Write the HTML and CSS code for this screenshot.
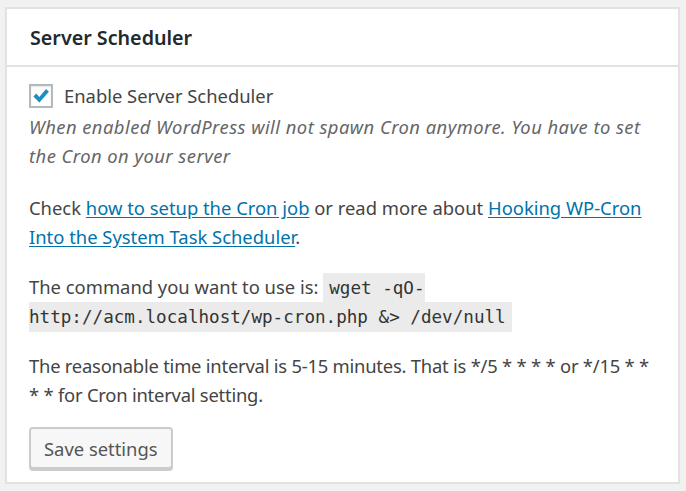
FILE: index.html
```html
<!DOCTYPE html>
<html lang="en">
<head>
<meta charset="utf-8">
<title>Server Scheduler</title>
<link rel="stylesheet" href="styles.css">
</head>
<body>
<div class="wrap">
  <div class="postbox">
    <h2 class="hndle">Server Scheduler</h2>
    <div class="inside">
      <label class="check-row">
        <span class="checkbox">
          <svg width="20" height="20" viewBox="0 0 20 20"><path d="M2.4 10.4 L5.3 7.6 L8.3 10.9 L15 3 L17.9 5.7 L8.4 16.6 Z" fill="#1e8cbe"/></svg>
        </span>
        <span>Enable Server Scheduler</span>
      </label>
      <p class="description">When enabled WordPress will not spawn Cron anymore. You have to set the Cron on your server</p>
      <p class="para para-first">Check <a href="#">how to setup the Cron job</a> or read more about <a href="#">Hooking WP-Cron Into the System Task Scheduler</a>.</p>
      <p class="para">The command you want to use is: <code>wget -qO- http://acm.localhost/wp-cron.php &amp;&gt; /dev/null</code></p>
      <p class="para para-tight">The reasonable time interval is 5-15 minutes. That is */5 * * * * or */15 * * * * for Cron interval setting.</p>
      <button class="button" type="button">Save settings</button>
    </div>
  </div>
</div>
</body>
</html>
```
FILE: styles.css
```css
html, body {
  margin: 0;
  padding: 0;
  background: #f1f1f1;
}
body {
  font-family: "Noto Sans", "Open Sans", sans-serif;
  font-size: 18.4px;
  line-height: 29px;
  color: #444;
}
.wrap {
  padding: 7px 6px 6px 5px;
}
.postbox {
  background: #fff;
  border: 2px solid #e2e2e2;
}
.hndle {
  margin: 0;
  height: 56px;
  display: flex;
  align-items: center;
  padding: 0 23px;
  font-size: 19.7px;
  font-weight: 600;
  color: #23282d;
  border-bottom: 2px solid #e2e2e2;
}
.inside {
  padding: 14px 20px 13px 22px;
}
.check-row {
  display: flex;
  align-items: center;
  gap: 11px;
  height: 29px;
}
.checkbox {
  width: 20px;
  height: 20px;
  border: 2px solid #b4b9be;
  display: flex;
  align-items: center;
  justify-content: center;
  box-shadow: inset 0 1px 2px rgba(0,0,0,0.1);
}
.checkbox svg { display: block; }
.description {
  margin: 2px 0 0;
  font-style: italic;
  color: #666;
  letter-spacing: 0.45px;
}
.para {
  margin: 21px 0 0;
}
.para-first {
  margin-top: 23px;
}
.para-tight {
  letter-spacing: -0.22px;
}
a {
  color: #0073aa;
  text-decoration: underline;
  text-underline-offset: 2px;
}
code {
  font-family: "DejaVu Sans Mono", "Liberation Mono", monospace;
  font-size: 17.6px;
  line-height: 1;
  background: #ebebeb;
  padding: 5px 6px 5px 6px;
  color: #333;
}
.button {
  margin-top: 18px;
  display: block;
  height: 42px;
  padding: 0 13px;
  font-family: inherit;
  font-size: 18.4px;
  color: #555;
  background: #f7f7f7;
  border: 2px solid #cccccc;
  border-radius: 4px;
  box-shadow: 0 2px 0 #cccccc;
}
```
